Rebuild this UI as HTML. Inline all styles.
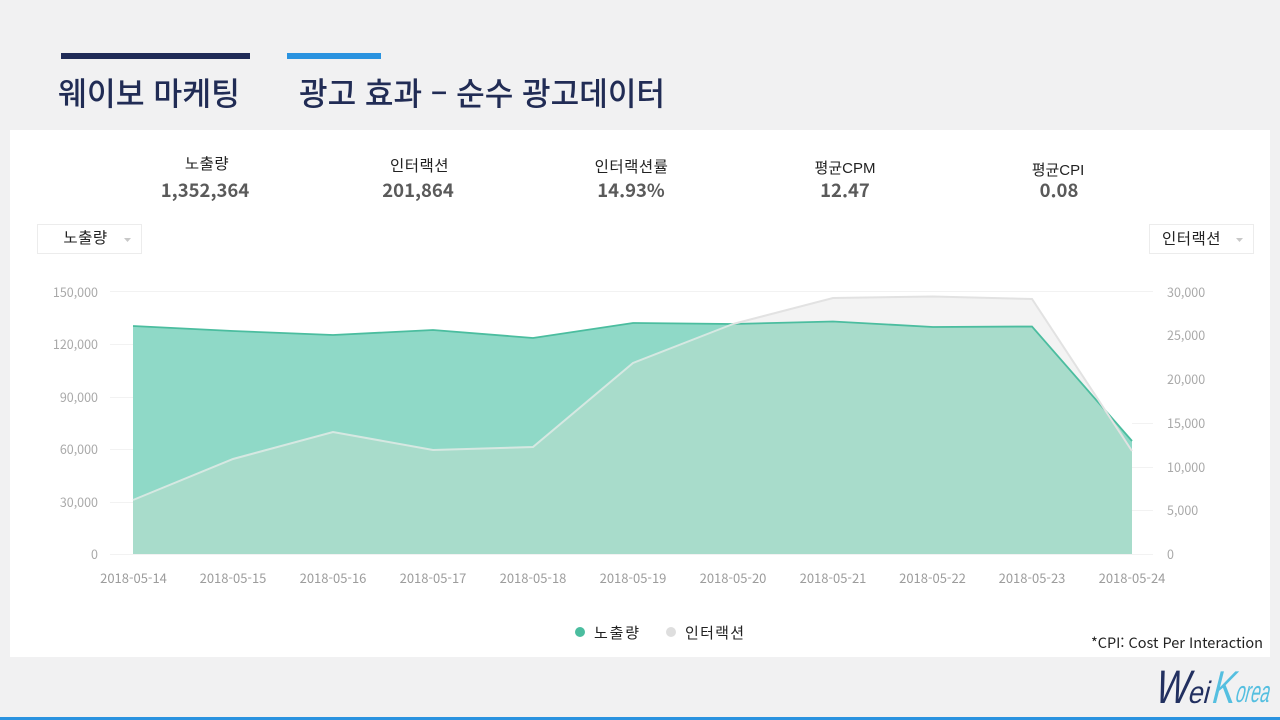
<!DOCTYPE html>
<html lang="ko">
<head>
<meta charset="utf-8">
<title>웨이보 마케팅</title>
<style>
html,body{margin:0;padding:0;width:1280px;height:720px;overflow:hidden;background:#f1f1f2}
svg{display:block}
text{font-family:"Liberation Sans","Noto Sans CJK KR",sans-serif}
text.t{font-family:"Noto Sans CJK KR","Liberation Sans",sans-serif;font-weight:500;font-size:32px;fill:#212c55}
.lb{font-size:15.5px;letter-spacing:.5px;fill:#222;text-anchor:middle}
.lb2{font-size:15px;fill:#222;text-anchor:middle}
text.v{font-family:"Noto Sans CJK KR","Liberation Sans",sans-serif;font-size:18.5px;font-weight:700;fill:#5a5a5a;text-anchor:middle}
.ax text{font-family:"Noto Sans CJK KR","Liberation Sans",sans-serif;font-size:12.5px;fill:#a9a9a9}
.dx text{font-family:"Noto Sans CJK KR","Liberation Sans",sans-serif;font-size:13px;fill:#9c9c9c;text-anchor:middle}
.g{stroke:#f2f2f2;stroke-width:1}
.logo text{font-family:"Liberation Sans",sans-serif}
</style>
</head>
<body>
<svg width="1280" height="720" viewBox="0 0 1280 720" xmlns="http://www.w3.org/2000/svg">
<rect width="1280" height="720" fill="#f1f1f2"/>
<rect x="61" y="53" width="189" height="6" fill="#1f2b57"/>
<rect x="287" y="53" width="94" height="6" fill="#2a93e0"/>
<text class="t" x="58" y="105" textLength="182" lengthAdjust="spacingAndGlyphs">웨이보 마케팅</text>
<text class="t" x="299" y="105" textLength="366" lengthAdjust="spacingAndGlyphs">광고 효과 – 순수 광고데이터</text>

<rect x="10" y="130" width="1260" height="527" fill="#fff"/>

<text class="lb" x="207" y="169">노출량</text>
<text class="v" x="205" y="197">1,352,364</text>
<text class="lb" x="419.500" y="171">인터랙션</text>
<text class="v" x="418" y="197">201,864</text>
<text class="lb" x="631.500" y="172">인터랙션률</text>
<text class="v" x="631" y="197">14.93%</text>
<text class="lb2" x="845" y="173">평균CPM</text>
<text class="v" x="845" y="197">12.47</text>
<text class="lb2" x="1058" y="175">평균CPI</text>
<text class="v" x="1059" y="197">0.08</text>

<rect x="37.500" y="224.500" width="104" height="29" fill="#fff" stroke="#ececec"/>
<text class="lb" x="85.500" y="243">노출량</text>
<path d="M124 238h7l-3.500 4z" fill="#c8c8c8"/>
<rect x="1149.500" y="224.500" width="104" height="29" fill="#fff" stroke="#ececec"/>
<text class="lb" x="1191.500" y="244">인터랙션</text>
<path d="M1236 238h7l-3.500 4z" fill="#c8c8c8"/>

<g class="g">
<line x1="110" x2="1153" y1="291.500" y2="291.500"/>
<line x1="110" x2="133" y1="344.500" y2="344.500"/>
<line x1="110" x2="133" y1="397.500" y2="397.500"/>
<line x1="110" x2="133" y1="449.500" y2="449.500"/>
<line x1="110" x2="133" y1="502.500" y2="502.500"/>
<line x1="110" x2="1153" y1="554.500" y2="554.500"/>
<line x1="1132" x2="1153" y1="467.500" y2="467.500"/>
<line x1="1132" x2="1153" y1="510.500" y2="510.500"/>
<line x1="1132" x2="1153" y1="423.500" y2="423.500"/>
</g>

<g class="ax" text-anchor="end">
<text x="98" y="297">150,000</text>
<text x="98" y="349">120,000</text>
<text x="98" y="402">90,000</text>
<text x="98" y="454">60,000</text>
<text x="98" y="507">30,000</text>
<text x="98" y="559">0</text>
</g>
<g class="ax">
<text x="1167" y="297">30,000</text>
<text x="1167" y="340">25,000</text>
<text x="1167" y="384">20,000</text>
<text x="1167" y="428">15,000</text>
<text x="1167" y="472">10,000</text>
<text x="1167" y="515">5,000</text>
<text x="1167" y="559">0</text>
</g>

<g>
<path d="M133 554V326L233 331 333 335 433 330 533 338 633 323 733 324 833 321.500 933 327 1032 326.500 1132 441V554Z" fill="#8fd9c7"/>
<path d="M133 554V500L233 459 333 432 433 450 533 447 633 363 733 324 833 298 933 296.500 1032 299 1132 451V554Z" fill="#f3f3f3"/>
<path d="M133 554V500L233 459 333 432 433 450 533 447 633 363 733 324 749 323.800 833 321.500 933 327 1032 326.500 1116 422 1132 451V554Z" fill="#a8dccb"/>
<path d="M133 326L233 331 333 335 433 330 533 338 633 323 733 324 833 321.500 933 327 1032 326.500 1132 441" fill="none" stroke="#4bbd9f" stroke-width="1.800"/>
<path d="M133 500L233 459 333 432 433 450 533 447 633 363 733 324" fill="none" stroke="#d6e8e2" stroke-width="2"/>
<path d="M733 324L833 298 933 296.500 1032 299 1132 451" fill="none" stroke="#e2e2e2" stroke-width="2"/>
</g>

<g class="dx">
<text x="133.500" y="583">2018-05-14</text>
<text x="233" y="583">2018-05-15</text>
<text x="333" y="583">2018-05-16</text>
<text x="433" y="583">2018-05-17</text>
<text x="533" y="583">2018-05-18</text>
<text x="633" y="583">2018-05-19</text>
<text x="733" y="583">2018-05-20</text>
<text x="833" y="583">2018-05-21</text>
<text x="932.500" y="583">2018-05-22</text>
<text x="1032" y="583">2018-05-23</text>
<text x="1132" y="583">2018-05-24</text>
</g>

<circle cx="580" cy="632" r="5" fill="#4bbd9f"/>
<text x="594" y="638" font-size="15" fill="#222" textLength="45">노출량</text>
<circle cx="671" cy="632" r="5" fill="#dedede"/>
<text x="685" y="638" font-size="15" fill="#222" textLength="59">인터랙션</text>

<text x="1091" y="648" style="font-family:'Noto Sans CJK KR','Liberation Sans',sans-serif" font-size="14.500" fill="#222" textLength="172" lengthAdjust="spacingAndGlyphs">*CPI: Cost Per Interaction</text>

<g class="logo" transform="translate(0 703) skewX(-14)">
<text x="1153" y="0" font-size="47" fill="#223060" textLength="34" lengthAdjust="spacingAndGlyphs">W</text>
<text x="1187" y="0" font-size="31" fill="#223060" textLength="21" lengthAdjust="spacingAndGlyphs">ei</text>
<text x="1210" y="0" font-size="46" fill="#55bfe0" textLength="23" lengthAdjust="spacingAndGlyphs">K</text>
<text x="1234" y="-1" font-size="30" fill="#55bfe0" textLength="34" lengthAdjust="spacingAndGlyphs">orea</text>
</g>

<rect x="0" y="717" width="1280" height="3" fill="#2a93e0"/>
</svg>
</body>
</html>
